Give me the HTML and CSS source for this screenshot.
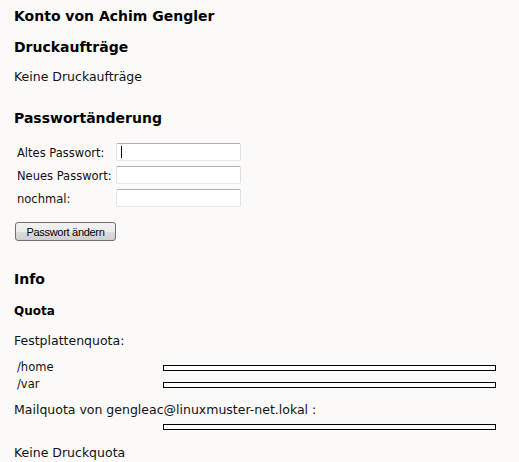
FILE: index.html
```html
<!DOCTYPE html>
<html lang="de">
<head>
<meta charset="utf-8">
<title>Konto von Achim Gengler</title>
<link rel="stylesheet" href="styles.css">
</head>
<body>
<div class="page">
  <h1 class="title">Konto von Achim Gengler</h1>
  <h2 class="section section-print">Druckaufträge</h2>
  <p class="text text-print">Keine Druckaufträge</p>

  <h2 class="section section-pw">Passwortänderung</h2>
  <form class="pwform">
    <label class="pwlabel" for="old">Altes Passwort:</label>
    <span class="field field-focus"><input class="pwinput" id="old" type="password"></span>
    <label class="pwlabel" for="new">Neues Passwort:</label>
    <span class="field"><input class="pwinput" id="new" type="password"></span>
    <label class="pwlabel" for="again">nochmal:</label>
    <span class="field"><input class="pwinput" id="again" type="password"></span>
  </form>
  <button class="btn" type="button">Passwort ändern</button>

  <h2 class="section section-info">Info</h2>
  <h3 class="subsection">Quota</h3>
  <p class="text text-disk">Festplattenquota:</p>
  <div class="quota">
    <span class="quota-label">/home</span>
    <span class="bar-cell"><span class="bar"></span></span>
    <span class="quota-label">/var</span>
    <span class="bar-cell"><span class="bar"></span></span>
  </div>
  <p class="text text-mail">Mailquota von gengleac@linuxmuster-net.lokal :</p>
  <div class="quota quota-mail">
    <span class="quota-label"></span>
    <span class="bar-cell"><span class="bar"></span></span>
  </div>
  <p class="text text-noprint">Keine Druckquota</p>
</div>
</body>
</html>
```

FILE: styles.css
```css
html, body {
  margin: 0;
  padding: 0;
  background: #fbfaf9;
}

body {
  font-family: "DejaVu Sans", Verdana, sans-serif;
  color: #111;
  font-size: 12px;
}

.page {
  padding: 0 14px;
}

.title,
.section {
  font-size: 14px;
  line-height: 16px;
  font-weight: bold;
  color: #000;
  margin: 0;
}

.title { margin-top: 8px; }
.section-print { margin-top: 15px; }
.section-pw { margin-top: 26px; }
.section-info { margin-top: 30px; }

.subsection {
  font-size: 12px;
  line-height: 14px;
  font-weight: bold;
  color: #000;
  margin: 17px 0 0;
}

.text {
  font-size: 12.5px;
  line-height: 14px;
  margin: 0;
}

.text-print { margin-top: 15px; }
.text-disk { margin-top: 16px; }
.text-mail { margin-top: 10px; }
.text-noprint { margin-top: 11px; }

.pwform {
  display: grid;
  grid-template-columns: 99px 125px;
  row-gap: 5px;
  margin: 17px 0 0 3px;
}

.pwlabel {
  font-size: 11.5px;
  line-height: 18px;
  padding-top: 1px;
  height: 18px;
  box-sizing: border-box;
  color: #111;
}

.field {
  position: relative;
  display: block;
  height: 18px;
}

.pwinput {
  display: block;
  box-sizing: border-box;
  width: 125px;
  height: 18px;
  margin: 0;
  padding: 0 3px;
  background: #fff;
  border: 1px solid;
  border-color: #abadb3 #dbdfe6 #e3e9ef #e2e3ea;
  border-radius: 2px;
  outline: none;
}

.field-focus::after {
  content: "";
  position: absolute;
  left: 5px;
  top: 3px;
  width: 1px;
  height: 12px;
  background: #000;
}

.btn {
  display: block;
  box-sizing: border-box;
  width: 101px;
  height: 19px;
  margin: 15px 0 0 1px;
  padding: 0;
  font-family: "Liberation Sans", Arial, sans-serif;
  font-size: 11px;
  letter-spacing: -0.3px;
  color: #000;
  border: 1px solid #707070;
  border-radius: 3px;
  background: linear-gradient(#f2f2f2 0%, #ebebeb 50%, #dddddd 51%, #cfcfcf 100%);
}

.quota {
  display: grid;
  grid-template-columns: 146px 333px;
  margin: 11px 0 0 3px;
}

.quota-mail {
  margin-top: 1px;
}

.quota-label {
  font-size: 11.5px;
  line-height: 17px;
  height: 17px;
}

.bar-cell {
  display: flex;
  align-items: center;
  height: 17px;
}

.bar {
  display: block;
  box-sizing: border-box;
  width: 333px;
  height: 6px;
  border: 1px solid #000;
  background: #fff;
}
```
